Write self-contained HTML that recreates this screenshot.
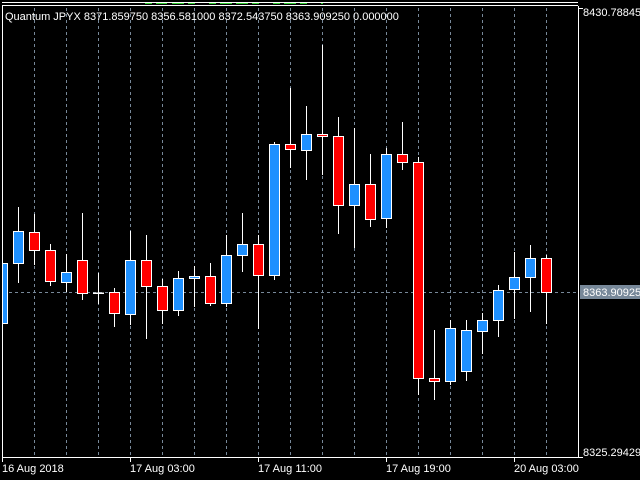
<!DOCTYPE html>
<html><head><meta charset="utf-8"><style>
html,body{margin:0;padding:0;background:#000;width:640px;height:480px;overflow:hidden}
svg{display:block}
text{font-family:"Liberation Sans",sans-serif;font-size:11px;fill:#fff}
</style></head><body>
<svg width="640" height="480" viewBox="0 0 640 480" xmlns="http://www.w3.org/2000/svg">
<rect width="640" height="480" fill="#000"/>
<g stroke="#778899" stroke-width="1" stroke-dasharray="3,3">
<line x1="34.5" y1="8" x2="34.5" y2="457"/><line x1="66.5" y1="8" x2="66.5" y2="457"/><line x1="98.5" y1="8" x2="98.5" y2="457"/><line x1="130.5" y1="8" x2="130.5" y2="457"/><line x1="162.5" y1="8" x2="162.5" y2="457"/><line x1="194.5" y1="8" x2="194.5" y2="457"/><line x1="226.5" y1="8" x2="226.5" y2="457"/><line x1="258.5" y1="8" x2="258.5" y2="457"/><line x1="290.5" y1="8" x2="290.5" y2="457"/><line x1="322.5" y1="8" x2="322.5" y2="457"/><line x1="354.5" y1="8" x2="354.5" y2="457"/><line x1="386.5" y1="8" x2="386.5" y2="457"/><line x1="418.5" y1="8" x2="418.5" y2="457"/><line x1="450.5" y1="8" x2="450.5" y2="457"/><line x1="482.5" y1="8" x2="482.5" y2="457"/><line x1="514.5" y1="8" x2="514.5" y2="457"/><line x1="546.5" y1="8" x2="546.5" y2="457"/>
<line x1="3" y1="292.5" x2="578" y2="292.5"/>
</g>
<g stroke="#fff" stroke-width="1">
<line x1="2.5" y1="255" x2="2.5" y2="325"/>
<line x1="18.5" y1="207" x2="18.5" y2="283"/>
<line x1="34.5" y1="214" x2="34.5" y2="265"/>
<line x1="50.5" y1="244" x2="50.5" y2="286"/>
<line x1="66.5" y1="254" x2="66.5" y2="292"/>
<line x1="82.5" y1="213" x2="82.5" y2="300"/>
<line x1="98.5" y1="273" x2="98.5" y2="304"/>
<line x1="114.5" y1="288" x2="114.5" y2="327"/>
<line x1="130.5" y1="231" x2="130.5" y2="325"/>
<line x1="146.5" y1="235" x2="146.5" y2="339"/>
<line x1="162.5" y1="279" x2="162.5" y2="324"/>
<line x1="178.5" y1="271" x2="178.5" y2="316"/>
<line x1="194.5" y1="266" x2="194.5" y2="307"/>
<line x1="210.5" y1="263" x2="210.5" y2="306"/>
<line x1="226.5" y1="235" x2="226.5" y2="307"/>
<line x1="242.5" y1="213" x2="242.5" y2="272"/>
<line x1="258.5" y1="235" x2="258.5" y2="329"/>
<line x1="274.5" y1="142" x2="274.5" y2="280"/>
<line x1="290.5" y1="88" x2="290.5" y2="168"/>
<line x1="306.5" y1="106" x2="306.5" y2="180"/>
<line x1="322.5" y1="45" x2="322.5" y2="175"/>
<line x1="338.5" y1="117" x2="338.5" y2="234"/>
<line x1="354.5" y1="128" x2="354.5" y2="248"/>
<line x1="370.5" y1="154" x2="370.5" y2="227"/>
<line x1="386.5" y1="148" x2="386.5" y2="228"/>
<line x1="402.5" y1="122" x2="402.5" y2="170"/>
<line x1="418.5" y1="157" x2="418.5" y2="395"/>
<line x1="434.5" y1="330" x2="434.5" y2="400"/>
<line x1="450.5" y1="320" x2="450.5" y2="385"/>
<line x1="466.5" y1="320" x2="466.5" y2="381"/>
<line x1="482.5" y1="313" x2="482.5" y2="354"/>
<line x1="498.5" y1="285" x2="498.5" y2="337"/>
<line x1="514.5" y1="252" x2="514.5" y2="319"/>
<line x1="530.5" y1="245" x2="530.5" y2="312"/>
<line x1="546.5" y1="255" x2="546.5" y2="324"/>
</g>
<g stroke="#fff" stroke-width="1">
<rect x="-2.5" y="263.5" width="10" height="60" fill="#1e90ff"/>
<rect x="13.5" y="231.5" width="10" height="32" fill="#1e90ff"/>
<rect x="29.5" y="232.5" width="10" height="18" fill="#ff0000"/>
<rect x="45.5" y="250.5" width="10" height="31" fill="#ff0000"/>
<rect x="61.5" y="272.5" width="10" height="10" fill="#1e90ff"/>
<rect x="77.5" y="260.5" width="10" height="33" fill="#ff0000"/>
<rect x="93.5" y="293" width="10" height="0.5" fill="#fff"/>
<rect x="109.5" y="292.5" width="10" height="21" fill="#ff0000"/>
<rect x="125.5" y="260.5" width="10" height="54" fill="#1e90ff"/>
<rect x="141.5" y="260.5" width="10" height="26" fill="#ff0000"/>
<rect x="157.5" y="286.5" width="10" height="24" fill="#ff0000"/>
<rect x="173.5" y="278.5" width="10" height="32" fill="#1e90ff"/>
<rect x="189.5" y="276.5" width="10" height="2" fill="#1e90ff"/>
<rect x="205.5" y="276.5" width="10" height="27" fill="#ff0000"/>
<rect x="221.5" y="255.5" width="10" height="48" fill="#1e90ff"/>
<rect x="237.5" y="244.5" width="10" height="11" fill="#1e90ff"/>
<rect x="253.5" y="244.5" width="10" height="31" fill="#ff0000"/>
<rect x="269.5" y="144.5" width="10" height="131" fill="#1e90ff"/>
<rect x="285.5" y="144.5" width="10" height="5" fill="#ff0000"/>
<rect x="301.5" y="134.5" width="10" height="16" fill="#1e90ff"/>
<rect x="317.5" y="134.5" width="10" height="2" fill="#ff0000"/>
<rect x="333.5" y="136.5" width="10" height="69" fill="#ff0000"/>
<rect x="349.5" y="184.5" width="10" height="21" fill="#1e90ff"/>
<rect x="365.5" y="184.5" width="10" height="35" fill="#ff0000"/>
<rect x="381.5" y="154.5" width="10" height="64" fill="#1e90ff"/>
<rect x="397.5" y="154.5" width="10" height="8" fill="#ff0000"/>
<rect x="413.5" y="162.5" width="10" height="216" fill="#ff0000"/>
<rect x="429.5" y="378.5" width="10" height="3" fill="#ff0000"/>
<rect x="445.5" y="328.5" width="10" height="53" fill="#1e90ff"/>
<rect x="461.5" y="330.5" width="10" height="41" fill="#1e90ff"/>
<rect x="477.5" y="320.5" width="10" height="11" fill="#1e90ff"/>
<rect x="493.5" y="290.5" width="10" height="30" fill="#1e90ff"/>
<rect x="509.5" y="277.5" width="10" height="12" fill="#1e90ff"/>
<rect x="525.5" y="258.5" width="10" height="19" fill="#1e90ff"/>
<rect x="541.5" y="258.5" width="10" height="34" fill="#ff0000"/>
</g>
<rect x="0" y="0" width="2" height="480" fill="#000"/>
<g stroke="#fff" stroke-width="1">
<line x1="2" y1="2.5" x2="578" y2="2.5"/>
<line x1="2" y1="5.5" x2="578" y2="5.5"/>
<line x1="2.5" y1="6" x2="2.5" y2="462"/>
<line x1="578.5" y1="6" x2="578.5" y2="458"/>
<line x1="2" y1="457.5" x2="579" y2="457.5"/>
<line x1="578" y1="8.5" x2="583" y2="8.5"/>
<line x1="578" y1="457.5" x2="583" y2="457.5"/>
<line x1="130.5" y1="457" x2="130.5" y2="462"/>
<line x1="258.5" y1="457" x2="258.5" y2="462"/>
<line x1="386.5" y1="457" x2="386.5" y2="462"/>
<line x1="514.5" y1="457" x2="514.5" y2="462"/>
</g>
<g stroke="#32cd32" stroke-width="1">
<line x1="145" y1="3.5" x2="152" y2="3.5"/><line x1="156" y1="3.5" x2="167" y2="3.5"/><line x1="172" y1="3.5" x2="184" y2="3.5"/><line x1="188" y1="3.5" x2="195" y2="3.5"/><line x1="209" y1="3.5" x2="216" y2="3.5"/><line x1="220" y1="3.5" x2="232" y2="3.5"/><line x1="236" y1="3.5" x2="248" y2="3.5"/><line x1="252" y1="3.5" x2="259" y2="3.5"/><line x1="273" y1="3.5" x2="280" y2="3.5"/><line x1="284" y1="3.5" x2="296" y2="3.5"/><line x1="300" y1="3.5" x2="307" y2="3.5"/><line x1="321" y1="3.5" x2="323" y2="3.5"/>
</g>
<text x="5" y="20">Quantum JPYX 8371.859750 8356.581000 8372.543750 8363.909250 0.000000</text>
<text x="583" y="16">8430.78845</text>
<text x="583" y="456">8325.29429</text>
<rect x="580" y="285" width="60" height="14" fill="#778899"/>
<text x="583" y="296" fill="#fff">8363.90925</text>
<text x="2" y="472">16 Aug 2018</text>
<text x="130" y="472">17 Aug 03:00</text>
<text x="258" y="472">17 Aug 11:00</text>
<text x="386" y="472">17 Aug 19:00</text>
<text x="514" y="472">20 Aug 03:00</text>
</svg>
</body></html>
